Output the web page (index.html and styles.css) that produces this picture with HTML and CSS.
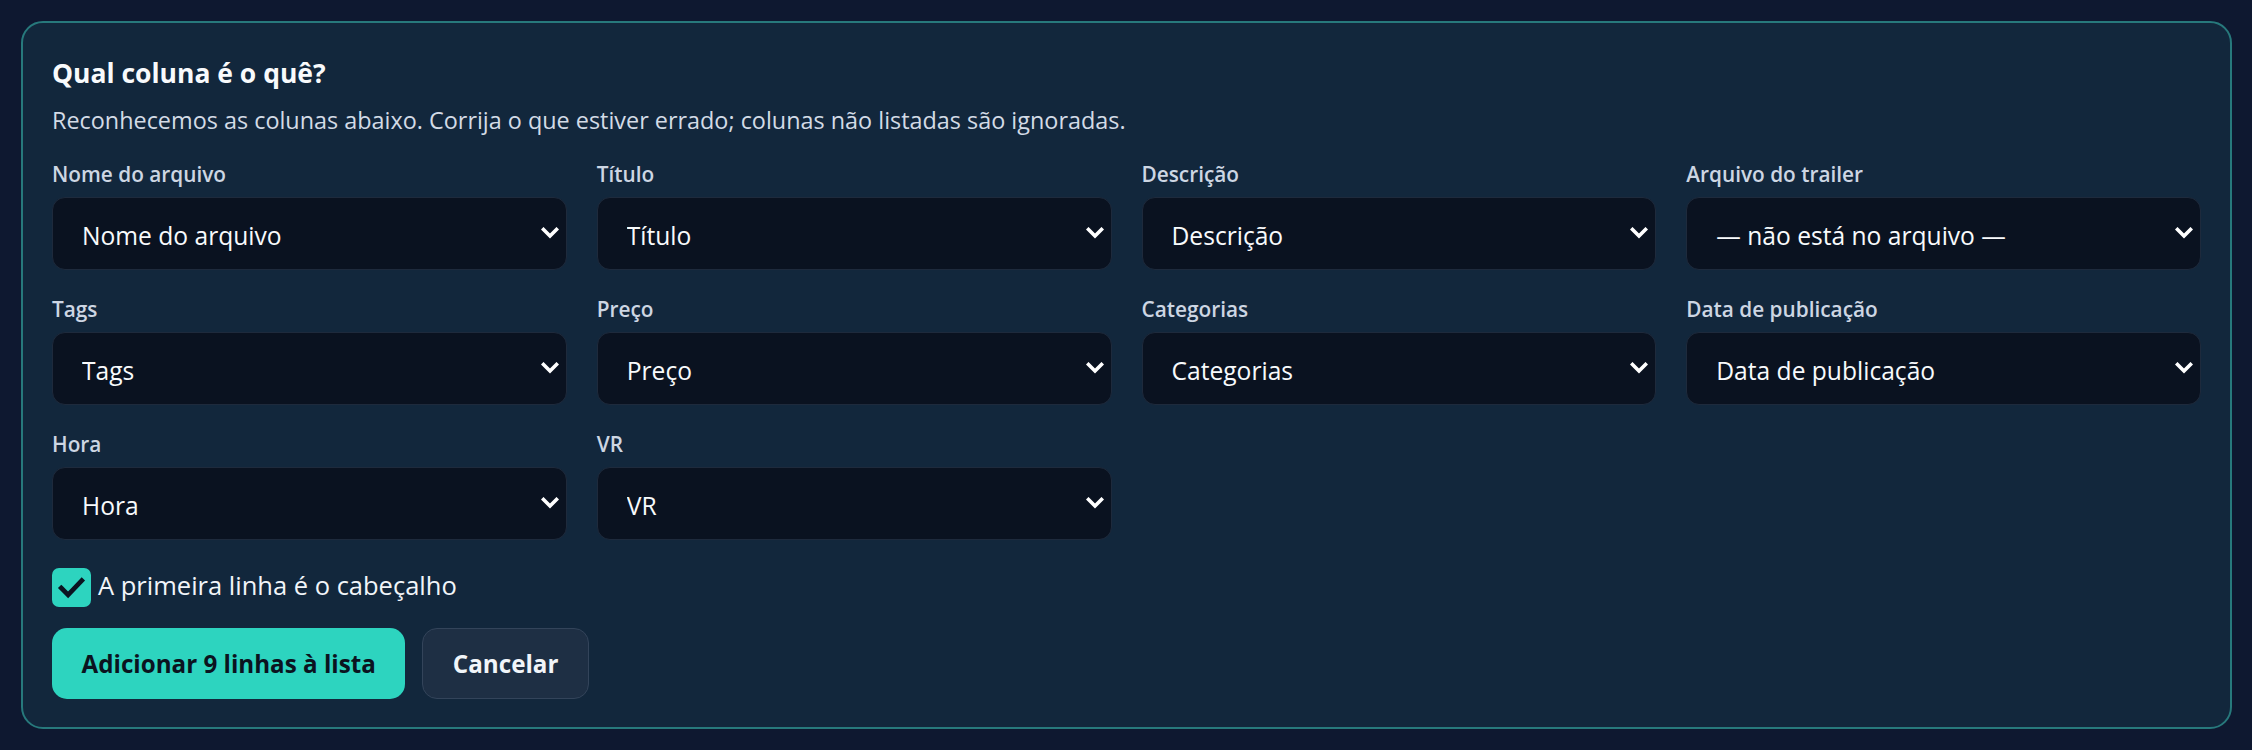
FILE: index.html
```html
<!DOCTYPE html>
<html lang="pt-BR">
<head>
<meta charset="utf-8">
<title>Qual coluna é o quê?</title>
<link rel="stylesheet" href="styles.css">
</head>
<body>
<section class="card">
  <h2 class="title">Qual coluna é o quê?</h2>
  <p class="subtitle">Reconhecemos as colunas abaixo. Corrija o que estiver errado; colunas não listadas são ignoradas.</p>
  <div class="grid">
    <div class="field">
      <label class="label">Nome do arquivo</label>
      <div class="select-wrap">
        <select class="select"><option>Nome do arquivo</option></select>
        <svg class="chev" viewBox="0 0 18 12" width="18" height="12"><polyline points="2.5,2.5 9,9 15.5,2.5" /></svg>
      </div>
    </div>
    <div class="field">
      <label class="label">Título</label>
      <div class="select-wrap">
        <select class="select"><option>Título</option></select>
        <svg class="chev" viewBox="0 0 18 12" width="18" height="12"><polyline points="2.5,2.5 9,9 15.5,2.5" /></svg>
      </div>
    </div>
    <div class="field">
      <label class="label">Descrição</label>
      <div class="select-wrap">
        <select class="select"><option>Descrição</option></select>
        <svg class="chev" viewBox="0 0 18 12" width="18" height="12"><polyline points="2.5,2.5 9,9 15.5,2.5" /></svg>
      </div>
    </div>
    <div class="field">
      <label class="label">Arquivo do trailer</label>
      <div class="select-wrap">
        <select class="select"><option>— não está no arquivo —</option></select>
        <svg class="chev" viewBox="0 0 18 12" width="18" height="12"><polyline points="2.5,2.5 9,9 15.5,2.5" /></svg>
      </div>
    </div>
    <div class="field">
      <label class="label">Tags</label>
      <div class="select-wrap">
        <select class="select"><option>Tags</option></select>
        <svg class="chev" viewBox="0 0 18 12" width="18" height="12"><polyline points="2.5,2.5 9,9 15.5,2.5" /></svg>
      </div>
    </div>
    <div class="field">
      <label class="label">Preço</label>
      <div class="select-wrap">
        <select class="select"><option>Preço</option></select>
        <svg class="chev" viewBox="0 0 18 12" width="18" height="12"><polyline points="2.5,2.5 9,9 15.5,2.5" /></svg>
      </div>
    </div>
    <div class="field">
      <label class="label">Categorias</label>
      <div class="select-wrap">
        <select class="select"><option>Categorias</option></select>
        <svg class="chev" viewBox="0 0 18 12" width="18" height="12"><polyline points="2.5,2.5 9,9 15.5,2.5" /></svg>
      </div>
    </div>
    <div class="field">
      <label class="label">Data de publicação</label>
      <div class="select-wrap">
        <select class="select"><option>Data de publicação</option></select>
        <svg class="chev" viewBox="0 0 18 12" width="18" height="12"><polyline points="2.5,2.5 9,9 15.5,2.5" /></svg>
      </div>
    </div>
    <div class="field">
      <label class="label">Hora</label>
      <div class="select-wrap">
        <select class="select"><option>Hora</option></select>
        <svg class="chev" viewBox="0 0 18 12" width="18" height="12"><polyline points="2.5,2.5 9,9 15.5,2.5" /></svg>
      </div>
    </div>
    <div class="field">
      <label class="label">VR</label>
      <div class="select-wrap">
        <select class="select"><option>VR</option></select>
        <svg class="chev" viewBox="0 0 18 12" width="18" height="12"><polyline points="2.5,2.5 9,9 15.5,2.5" /></svg>
      </div>
    </div>
  </div>
  <label class="check">
    <span class="box"><svg viewBox="0 0 40 40" width="39" height="39"><polyline points="9.5,20.5 16.5,27.5 30.5,13" /></svg></span>
    <span class="check-text">A primeira linha é o cabeçalho</span>
  </label>
  <div class="actions">
    <button class="btn btn-primary">Adicionar 9 linhas à lista</button>
    <button class="btn btn-secondary">Cancelar</button>
  </div>
</section>
</body>
</html>
```

FILE: styles.css
```css
* { box-sizing: border-box; }
html, body { height: 100%; }
body {
  margin: 0;
  padding: 21px 20px 21px 21px;
  background: #0e1830;
  font-family: "Open Sans", "Noto Sans", "Liberation Sans", sans-serif;
  color: #f1f5f9;
}
.card {
  border: 2px solid #27797c;
  border-radius: 22px;
  background: #12273c;
  padding: 33.5px 29px 28px 29px;
}
.title {
  margin: 0;
  font-size: 26.5px;
  line-height: 32px;
  font-weight: 700;
  color: #f8fafc;
}
.subtitle {
  margin: 15.5px 0 0;
  font-size: 23.4px;
  line-height: 32px;
  color: #d3dbe6;
}
.grid {
  margin-top: 24px;
  display: grid;
  grid-template-columns: repeat(4, 1fr);
  column-gap: 30px;
  row-gap: 25px;
}
.label {
  display: block;
  font-size: 20.8px;
  line-height: 28px;
  font-weight: 600;
  color: #cdd6e3;
  margin-bottom: 9px;
}
.select-wrap { position: relative; }
.select {
  appearance: none;
  -webkit-appearance: none;
  display: block;
  width: 100%;
  height: 73px;
  padding: 4px 40px 0 29px;
  border: 1.5px solid #1e2a3c;
  border-radius: 13px;
  background: #0a1220;
  color: #f8fafc;
  font-family: inherit;
  font-size: 24.6px;
  outline: none;
}
.chev {
  position: absolute;
  right: 8px;
  top: 30px;
  fill: none;
  stroke: #ffffff;
  stroke-width: 3.6;
  stroke-linecap: square;
  stroke-linejoin: miter;
  pointer-events: none;
}
.check {
  margin-top: 28px;
  display: flex;
  align-items: center;
  gap: 7px;
}
.box {
  width: 39px;
  height: 39px;
  border-radius: 7px;
  background: #2dd4bf;
  display: flex;
}
.box svg {
  fill: none;
  stroke: #0b1320;
  stroke-width: 4.8;
  stroke-linecap: square;
}
.check-text {
  font-size: 25.5px;
  line-height: 30px;
  color: #f1f5f9;
  margin-top: -5px;
}
.actions {
  margin-top: 21px;
  display: flex;
  gap: 17px;
}
.btn {
  height: 71px;
  padding: 0 29.5px;
  border-radius: 15px;
  font-family: inherit;
  font-size: 24.2px;
  font-weight: 700;
  cursor: pointer;
}
.btn-primary {
  background: #2dd4bf;
  color: #0b1320;
  border: none;
}
.btn-secondary {
  background: #1e2f44;
  color: #f1f5f9;
  border: 1.5px solid #33445a;
}
```
